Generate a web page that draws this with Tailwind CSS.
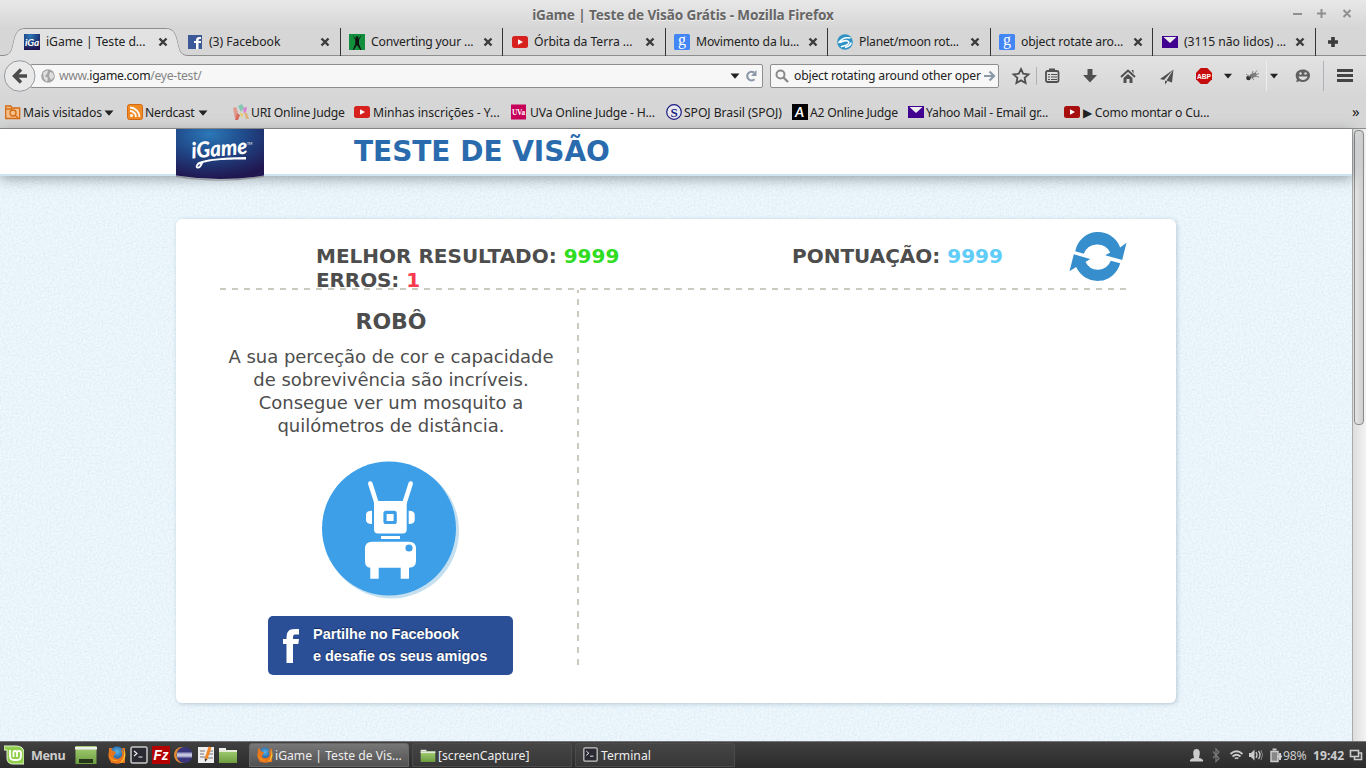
<!DOCTYPE html>
<html lang="pt">
<head>
<meta charset="utf-8">
<title>iGame | Teste de Visão Grátis</title>
<script src="https://cdn.jsdelivr.net/npm/@tailwindcss/browser@4"></script>
</head>
<body class="w-[1366px] h-[768px] overflow-hidden flex flex-col bg-[#d6d6d6] font-['Noto_Sans',sans-serif] text-[12px] text-[#222] whitespace-nowrap">
<svg width="0" height="0" class="absolute">
<defs>
<radialGradient id="logoBg" cx=".38" cy=".1" r=".9"><stop offset="0" stop-color="#2b78b8"/><stop offset=".45" stop-color="#204a8a"/><stop offset="1" stop-color="#201650"/></radialGradient>
<linearGradient id="green" x2="0" y2="1"><stop offset="0" stop-color="#a5cf75"/><stop offset="1" stop-color="#6d9c3f"/></linearGradient>
<radialGradient id="fox" cx=".5" cy=".35" r=".6"><stop offset="0" stop-color="#58b4e8"/><stop offset="1" stop-color="#164b91"/></radialGradient>
<symbol id="close" viewBox="0 0 10 10"><path d="M1.500 1.500l7 7M8.500 1.500l-7 7" stroke="#3b3b3b" stroke-width="2.400"/></symbol>
<symbol id="caret" viewBox="0 0 10 6"><path d="M.5.5h9L5 5.700z" fill="#222"/></symbol>
<symbol id="yt" viewBox="0 0 16 16"><rect y="2" width="16" height="12" rx="2.500" fill="#d6211f"/><path d="M6 5.300v5.400L11 8z" fill="#fff"/></symbol>
<symbol id="goog" viewBox="0 0 16 16"><rect width="16" height="16" rx="1.500" fill="#4285f4"/><text x="8" y="11" text-anchor="middle" font-family="Liberation Serif" font-size="16" fill="#fff">g</text></symbol>
<symbol id="mail" viewBox="0 0 16 16"><rect y="2" width="16" height="12" fill="#400090"/><path d="M1.500 3h13L8 9z" fill="#eee"/></symbol>
<symbol id="firefox" viewBox="0 0 18 18"><path d="M1 2h16v15H3z" fill="#e8761c"/><circle cx="9" cy="8" r="7.500" fill="url(#fox)"/><path d="M1.500 1.500L5 5l3 1-1.500 2.500-1 2c1 2.500 5 3 7.500.5 2-2 1-5.500-.5-7.500C16 4 18 8 17 12c-1.500 4.500-6 6.500-10 5.500C2 16.500 0 12 .5 8z" fill="#e8761c"/><path d="M16 3c3 5 1 13-5 14.500 4-2 6-8 5-14.500z" fill="#fcc935"/><path d="M1.500 8c1 5 4 7 9 6-4 3-9 0-9-6z" fill="#f7a323"/></symbol>
<symbol id="term" viewBox="0 0 18 18"><rect x="1" y="1" width="16" height="16" rx="1.500" fill="#2a2a33" stroke="#c9c9c9" stroke-width="1.500"/><path d="M4 5l3 2.500L4 10M8.500 11h4" stroke="#eee" stroke-width="1.200" fill="none"/></symbol>
<symbol id="folder" viewBox="0 0 18 16"><path d="M0 3V1h7v2z" fill="#eee"/><path d="M0 3h18v13H0z" fill="url(#green)"/><path d="M0 3h18v2H0z" fill="#e4ecd9"/></symbol>
</defs>
</svg>

<header class="h-[128px] shrink-0 flex flex-col bg-[#d6d6d6]">
  <div class="h-[28px] shrink-0 flex items-center bg-linear-to-b from-[#e8e8e8] to-[#d6d6d6]">
    <div class="w-[1283px] pl-[83px] text-center font-bold text-[13.500px] leading-[16px] pt-px text-[#666] tracking-[-0.09px] [text-shadow:0_1px_0_#f0f0f0]">iGame | Teste de Visão Grátis - Mozilla Firefox</div>
    <svg width="83" height="28" fill="none" stroke="#8f8f8f" stroke-width="2"><path d="M10 14h9M34 13.500h9M38.500 9v9M60.500 10l7 7M67.500 10l-7 7"/></svg>
  </div>
  <div class="h-[28px] shrink-0 relative flex">
    <svg class="absolute left-0 top-0" width="1366" height="28"><path d="M0 27.500h4c8-1 8-7 10-15s4-12 12-12h139c8 0 10 4 12 12s2 14 10 15h1179V28H0z" fill="none" stroke="#8e8e8e"/><path d="M4 28c8-1 8-7 10-15s4-12 12-12h139c8 0 10 4 12 12s2 14 10 15z" fill="#e2e2e2"/></svg>
    <nav class="relative flex ml-[15px] h-[28px] text-[12.200px] tracking-[-0.06px]">
      <div class="w-[163px] h-[28px] flex items-center pl-[9px]"><svg width="16" height="16"><rect width="16" height="16" fill="url(#logoBg)"/><text x="1" y="12" font-family="Lato" font-style="italic" font-weight="bold" font-size="10" fill="#fff">iGa</text></svg><span class="w-[118px] pl-[6px]">iGame | Teste d...</span><svg width="10" height="10"><use href="#close"/></svg></div>
      <div class="w-[163px] h-[28px] flex items-center pl-[9px] border-r border-[#333]"><svg width="16" height="16"><rect x="1" y="1" width="14" height="14" fill="#3b5998"/><path d="M9 15V9H7V7h2c0-3 1-4.500 5-4v2c-2 0-2.500 0-2.500 2H14v2h-2.500v6z" fill="#fff"/></svg><span class="w-[117px] pl-[6px]">(3) Facebook</span><svg width="10" height="10"><use href="#close"/></svg></div>
      <div class="w-[162px] h-[28px] flex items-center pl-[8px] border-r border-[#333]"><svg width="16" height="16"><rect width="16" height="16" fill="#128f3c"/><path d="M3.500 1l3 3.500h3L12.500 1l-2.500 5v4l2.500 6h-1L8 11l-3.300 5h-1L6.300 10V6z" fill="#111"/><circle cx="8" cy="3.500" r="1.300" fill="#111"/></svg><span class="w-[117px] pl-[6px] tracking-[-0.17px]">Converting your ...</span><svg class="ml-px" width="10" height="10"><use href="#close"/></svg></div>
      <div class="w-[163px] h-[28px] flex items-center pl-[9px] border-r border-[#333]"><svg width="16" height="16"><use href="#yt"/></svg><span class="w-[117px] pl-[6px]">Órbita da Terra ...</span><svg width="10" height="10"><use href="#close"/></svg></div>
      <div class="w-[162px] h-[28px] flex items-center pl-[8px] border-r border-[#333]"><svg width="16" height="16"><use href="#goog"/></svg><span class="w-[117px] pl-[6px] tracking-[-0.17px]">Movimento da lu...</span><svg class="ml-px" width="10" height="10"><use href="#close"/></svg></div>
      <div class="w-[163px] h-[28px] flex items-center pl-[9px] border-r border-[#333]"><svg width="16" height="16"><circle cx="8" cy="8" r="7.800" fill="#2e93c4"/><path d="M1.500 9c3-5 7-6 12-5M3 8.500c5-3 10-2 8.500 1s-5 1.500-7.500 3.500M8 13.500c4-1 6-3 6-5" stroke="#fff" stroke-width="1.600" fill="none"/></svg><span class="w-[117px] pl-[6px] tracking-[-0.23px]">Planet/moon rot...</span><svg width="10" height="10"><use href="#close"/></svg></div>
      <div class="w-[162px] h-[28px] flex items-center pl-[8px] border-r border-[#333]"><svg width="16" height="16"><use href="#goog"/></svg><span class="w-[117px] pl-[6px] tracking-[-0.14px]">object rotate aro...</span><svg class="ml-px" width="10" height="10"><use href="#close"/></svg></div>
      <div class="w-[163px] h-[28px] flex items-center pl-[9px] border-r border-[#333]"><svg width="16" height="16"><use href="#mail"/></svg><span class="w-[117px] pl-[6px]">(3115 não lidos) ...</span><svg width="10" height="10"><use href="#close"/></svg></div>
      <svg width="34" height="28"><path d="M17 9v10M12 14h10" stroke="#3b3b3b" stroke-width="3.600"/></svg>
    </nav>
  </div>
  <div class="h-[42px] shrink-0 flex items-center bg-linear-to-b from-[#e2e2e2] to-[#d6d6d6]">
    <svg class="relative z-10" width="36" height="42"><circle cx="19.700" cy="20" r="15.300" fill="#e9e9e9" stroke="#959ba2"/><path d="M27 20H16M21 13.500L14.500 20l6.500 6.500" fill="none" stroke="#4b4b4b" stroke-width="3.400"/></svg>
    <div class="-ml-[6px] w-[733px] h-[24px] mb-[2px] border border-[#8e8e8e] rounded-[2px] bg-[#f7f7f7] flex items-center pl-[10px]">
      <svg width="14" height="14"><circle cx="7" cy="7" r="6.800" fill="#a3a3a3"/><path d="M2 4c2-2 4-3 5-2l-1 3-2 2 3 2-1 4-3-3zM9 3l3 1 1 4-3 3-2-4z" fill="#dedede"/></svg>
      <span class="pl-[4px] pt-px text-[12.200px] tracking-[-0.3px] text-[#858585] w-[675px]">www.<span class="text-[#222]">igame.com</span>/eye-test/</span>
      <svg width="10" height="6"><use href="#caret"/></svg>
      <svg class="ml-[4px]" width="14" height="14"><path d="M10.500 10.200A4.300 4.300 0 1 1 10 3.500" fill="none" stroke="#8b98a8" stroke-width="2.200"/><path d="M12.500 1v6H7z" fill="#8b98a8"/></svg>
    </div>
    <div class="ml-[7px] w-[229px] h-[24px] mb-[2px] border border-[#8e8e8e] rounded-[2px] bg-[#f7f7f7] flex items-center pl-[4px]">
      <svg width="14" height="14"><circle cx="5.500" cy="5.500" r="4" fill="none" stroke="#8a8a8a" stroke-width="2"/><path d="M8.500 8.500l4.500 4.500" stroke="#8a8a8a" stroke-width="2.400"/></svg>
      <span class="ml-[5px] pt-px w-[190px] text-[12.200px] tracking-[-0.2px]">object rotating around other oper</span>
      <svg width="12" height="12"><path d="M0 6h9M5.500 1.500L10 6l-4.500 4.500" fill="none" stroke="#8b98a8" stroke-width="2.200"/></svg>
    </div>
    <div class="ml-[7px] h-[40px] mb-[2px] flex items-center">
      <svg width="30" height="20"><path d="M15 3l2.200 4.700 5.300.6-3.900 3.600 1 5.100-4.600-2.600-4.600 2.600 1-5.100-3.900-3.600 5.300-.6z" fill="none" stroke="#505050" stroke-width="1.800"/></svg>
      <i class="w-px h-[18px] bg-[#b0b0b5]"></i>
      <svg width="30" height="20" fill="none" stroke="#505050"><rect x="9" y="5" width="12.500" height="11" rx="1.500" stroke-width="1.800"/><path d="M12 4h6" stroke-width="3"/><path d="M11 8.500h2M14 8.500h6M11 11h2M14 11h6M11 13.500h2M14 13.500h6" stroke-width="1.100"/></svg>
      <svg width="46" height="20"><path d="M20.500 3h5v6h4.500l-7 7.500L16 9h4.500z" fill="#505050"/></svg>
      <svg width="30" height="20"><path d="M8 11l7-6.500 7 6.500" fill="none" stroke="#505050" stroke-width="2"/><path d="M10.500 12L15 8l4.500 4v5h-3v-4h-3v4h-3zM18.500 4h2v4z" fill="#505050"/></svg>
      <svg width="48" height="20"><path d="M30.500 3.500L17 13l4 1zM30.500 3.500L23.500 14.500l5.500 2zM22 14.500V18.500l2.500-3z" fill="#505050"/></svg>
      <svg width="26" height="20"><path d="M9.700 2h6.600L21 6.700v6.600L16.300 18H9.700L5 13.300V6.700z" fill="#c60c0c"/><text x="6" y="13" font-family="Liberation Sans" font-weight="bold" font-size="8" fill="#fff" textLength="14" lengthAdjust="spacingAndGlyphs">ABP</text></svg>
      <svg width="22" height="20"><use href="#caret" x="6.500" y="7" width="9" height="6"/></svg>
      <svg width="27" height="20"><ellipse cx="14" cy="9.500" rx="4" ry="2.300" transform="rotate(-25 14 9.500)" fill="#777"/><circle cx="9.500" cy="12" r="2.300" fill="#333"/><path d="M7 8l4 3M14 5l-1 4M18 4.500l-3 4M20 7.500l-5 2M20 11l-6-1M15 14l-3-3" stroke="#888"/></svg>
      <i class="w-px h-[30px] bg-[#eee]"></i>
      <svg width="14" height="20"><use href="#caret" x="2.500" y="7" width="9" height="6"/></svg>
      <svg width="42" height="20"><path d="M22 3.500c4 0 7 2.500 7 6s-3 6.500-7 6.500c-1.500 0-2.500-.2-3.500-.7L15 16l1-2.500c-3-4-1-10 6-10z" fill="#606060"/><path d="M17.500 10.500h9c-1 4.500-8 4.500-9 0z" fill="#ddd"/><circle cx="19.500" cy="7.500" r="1.200" fill="#ddd"/><circle cx="24.500" cy="7.500" r="1.200" fill="#ddd"/></svg>
      <i class="w-px h-[30px] bg-[#aeb2b8]"></i>
      <svg width="42" height="20"><path d="M13 4.500h16M13 9.500h16M13 14.500h16" stroke="#444" stroke-width="3"/></svg>
    </div>
  </div>
  <div class="h-[30px] flex items-center pl-[5px] text-[12.200px] tracking-[-0.24px]">
    <div class="w-[122px] flex items-center"><svg class="mb-px" width="16" height="16"><path d="M.7 2h5l1.500 2h7.500v10.500H.7z" fill="#f6c08b" stroke="#d46b14" stroke-width="1.300"/><circle cx="8" cy="9" r="3" fill="none" stroke="#d46b14" stroke-width="1.300"/><path d="M10 11l3 3M1 5h6" stroke="#d46b14" stroke-width="1.300"/></svg><span class="pl-[2px] w-[83px] tracking-[-0.1px]">Mais visitados</span><svg width="10" height="6"><use href="#caret"/></svg></div>
    <div class="w-[106px] flex items-center"><svg class="mb-px" width="16" height="16"><rect x=".5" y=".5" width="15" height="15" rx="2" fill="#f08a24" stroke="#d46b14"/><circle cx="4.500" cy="11.500" r="1.500" fill="#fff"/><path d="M3 7a6 6 0 0 1 6 6M3 3.500a9.500 9.500 0 0 1 9.500 9.500" stroke="#fff" stroke-width="1.800" fill="none"/></svg><span class="pl-[2px] w-[55px]">Nerdcast</span><svg width="10" height="6"><use href="#caret"/></svg></div>
    <div class="w-[121px] flex items-center"><svg class="mb-px" width="16" height="16"><path d="M5 2l4-2 2 4-3 4z" fill="#84c8b4"/><path d="M0 4l3-1 2 5-3 7z" fill="#e09a90"/><path d="M10 4l4-1-1 5-2 2z" fill="#d97fd4"/><path d="M4 9l3 2-2 5H2z" fill="#d96a5c"/><path d="M7 9l3 1-1 4z" fill="#efc94a"/><path d="M11 8l3 1 2 6h-3z" fill="#ddb380"/></svg><span class="pl-[2px]">URI Online Judge</span></div>
    <div class="w-[157px] flex items-center"><svg class="mb-px" width="16" height="16"><use href="#yt"/></svg><span class="pl-[3px] tracking-[-0.05px]">Minhas inscrições - Y...</span></div>
    <div class="w-[155px] flex items-center"><svg class="mb-px" width="16" height="16"><rect width="15" height="15" y=".5" fill="#c8005a"/><text x="1" y="11" font-family="Liberation Serif" font-weight="bold" font-size="8" fill="#fff" textLength="13" lengthAdjust="spacingAndGlyphs">UVa</text></svg><span class="pl-[3px] tracking-[-0.17px]">UVa Online Judge - H...</span></div>
    <div class="w-[126px] flex items-center"><svg class="mb-px" width="16" height="16"><circle cx="8" cy="8" r="7.300" fill="#e8e8f0" stroke="#1a1a80" stroke-width="1.200"/><text x="8" y="12.500" text-anchor="middle" font-family="Liberation Serif" font-weight="bold" font-size="13" fill="#1a1a80">S</text></svg><span class="pl-[2px] tracking-[-0.08px]">SPOJ Brasil (SPOJ)</span></div>
    <div class="w-[116px] flex items-center"><svg class="mb-px" width="16" height="16"><rect width="16" height="16"/><text x="7.500" y="13" text-anchor="middle" font-family="Lato" font-style="italic" font-weight="bold" font-size="14" fill="#fff">A</text></svg><span class="pl-[2px]">A2 Online Judge</span></div>
    <div class="w-[156px] flex items-center"><svg class="mb-px" width="16" height="16"><use href="#mail"/></svg><span class="pl-[2px]">Yahoo Mail - Email gr...</span></div>
    <div class="w-[287px] flex items-center"><svg class="mb-px" width="16" height="16"><rect y="2" width="16" height="12" rx="2.500" fill="#a80f0f"/><path d="M6 5.300v5.400L11 8z" fill="#fff"/></svg><span class="pl-[3px] tracking-[-0.2px]">▶ Como montar o Cu...</span></div>
    <span class="text-[15px] leading-[14px] pb-[5px] pl-px">»</span>
  </div>
</header>

<div class="h-[613px] shrink-0 border-t border-[#8e8e8e] flex">
  <main class="w-[1352px] h-[612px] relative bg-[#e8f3fb] text-[#4d4d4d] font-['DejaVu_Sans',sans-serif]">
    <svg class="absolute inset-0" width="1352" height="612"><filter id="grain" x="0" y="0" width="100%" height="100%" color-interpolation-filters="sRGB"><feTurbulence type="fractalNoise" baseFrequency=".5" numOctaves="2" seed="4"/><feColorMatrix values=".13 0 0 0 .848  .08 0 0 0 .916  .035 0 0 0 .965  0 0 0 0 1"/></filter><rect width="1352" height="612" filter="url(#grain)"/></svg>
    <div class="relative h-[47px] bg-white border-b-2 border-[#cfe3f0] shadow-[0_3px_12px_rgba(70,80,88,0.5)] flex pl-[176px]">
      <svg class="relative h-[54px] w-[88px] shrink-0" viewBox="0 0 88 54"><path d="M0 46.500q44 8 88 0v1.500q-44 7.500-88 0z" fill="#777" opacity=".6"/><path d="M0 0h88v46.500q-44 7-88 0z" fill="url(#logoBg)"/><g transform="translate(16 29.500) rotate(-5)"><text font-family="Lato" font-style="italic" font-weight="900" font-size="22" fill="#fff" textLength="56" lengthAdjust="spacingAndGlyphs">iGame</text></g><path d="M22 33.500C30 30 45 28.500 70 28v2.500C46 30.500 34 31.500 27 34q-2 6-6 5.500-3-2 1-6zM23 35.500q-2 1.500-1.500 2.500 2 0 3-3z" fill="#fff" fill-rule="evenodd"/><text x="71" y="16" font-family="Lato" font-size="3.500" fill="#fff">TM</text></svg>
      <h1 class="pl-[90px] pt-[5px] font-bold text-[28px] leading-[36px] text-[#2a6bae] tracking-[-0.03px]">TESTE DE VISÃO</h1>
    </div>
    <section class="relative mt-[43px] ml-[176px] w-[1000px] h-[484px] bg-white rounded-[6px] shadow-[1px_1px_4px_rgba(90,120,140,0.35)] px-[44px]">
      <div class="h-[69px] pt-[25px] flex font-bold text-[20px] leading-[24px]">
        <div class="pl-[96px] w-[572px]"><p>MELHOR RESULTADO: <span class="text-[#2fdc1f]">9999</span></p><p class="tracking-[-0.1px]">ERROS: <span class="text-[#f93a4c]">1</span></p></div>
        <p class="w-[277px]">PONTUAÇÃO: <span class="text-[#60ccf8]">9999</span></p>
        <svg class="-mt-[12px] shrink-0" width="60" height="51" viewBox="0 0 60 51" fill="#368fcc"><path d="M6.200 19.300A23.500 24 0 0 1 51.200 15.500L57.500 10.700 53.200 28 36.200 23.300 41.200 20.500A14.500 14.500 0 0 0 14.800 21.700z"/><path d="M51.200 31.300A23.500 24 0 0 1 7.200 35L.5 39.200 4.800 22.300 21.200 27 16.500 30A14 14.500 0 0 0 41.800 28.800z"/></svg>
      </div>
      <div class="w-[906px] h-[2px] bg-[repeating-linear-gradient(90deg,#ccc9bf_0_6px,transparent_6px_12px)]"></div>
      <div class="flex">
        <div class="w-[341px] mr-[16px] flex flex-col items-center">
          <h2 class="mt-[18px] pl-px font-bold text-[22px] leading-[28px]">ROBÔ</h2>
          <p class="mt-[9px] pl-px text-[18px] leading-[23px] text-center tracking-[-0.03px]">A sua perceção de cor e capacidade<br>de sobrevivência são incríveis.<br>Consegue ver um mosquito a<br>quilómetros de distância.</p>
          <svg class="mt-[24px] shrink-0" width="137" height="138" viewBox="0 0 137 138"><circle cx="69.500" cy="70" r="67.500" fill="#c4e0f0"/><circle cx="67" cy="67.500" r="67" fill="#3d9fe8"/><g fill="#fff"><path d="M48.300 22.500L54.500 42M88.700 22.500L82.500 42" stroke="#fff" stroke-width="4.500" stroke-linecap="round"/><path d="M52 40h32.700v28.500q0 4-4 4H56q-4 0-4-4z"/><path d="M50 49.700V63q-6 0-6-4v-5.300q0-4 6-4zM86.700 49.700V63q6 0 6-4v-5.300q0-4-6-4z"/><path d="M59 75h19v3H59z"/><path d="M50 80.700h37q7 0 7 7v12q0 7-7 7v11h-8.300v-11H56.700v11h-8.400v-11q-5.300 0-5.300-7v-12q0-7 7-7z"/></g><rect x="63" y="51.300" width="10.200" height="10.200" rx="1" fill="#fff" stroke="#3d9fe8" stroke-width="3.200"/><circle cx="87" cy="87" r="3.600" fill="#3d9fe8"/></svg>
          <button class="mt-[17px] w-[245px] h-[59px] rounded-[5px] bg-[#2b4f96] flex items-center text-left text-white font-['Liberation_Sans',sans-serif] font-bold text-[14.500px] leading-[22px] [text-shadow:0_-1px_1px_#162b58]"><svg class="ml-[15px]" width="17" height="34"><path d="M3.500 34V15H0v-5h3.500C3.500 3 5 0 12 0h4v5.500h-3.500C10 5.500 10 7 10 10h6l-.7 5H10v19z" fill="#fff"/></svg><span class="ml-[13px] pb-[2px] tracking-[-0.03px]">Partilhe no Facebook<br>e desafie os seus amigos</span></button>
        </div>
        <div class="w-[2px] h-[375px] bg-[repeating-linear-gradient(180deg,#ccc9bf_0_3px,transparent_3px_9px,#ccc9bf_9px_12px)]"></div>
      </div>
    </section>
  </main>
  <aside class="w-[14px] h-[612px] border-l border-[#aaa] bg-linear-to-r from-[#ddd] to-[#f3f3f3] pl-px pt-px"><div class="w-[10px] h-[295px] rounded-[4px] border border-[#8b8b8b] bg-linear-to-r from-[#e5e5e5] to-[#cecece]"></div></aside>
</div>

<footer class="h-[27px] shrink-0 border-t border-[#777] bg-linear-to-b from-[#404040] to-[#2b2b2b] flex items-center text-[12.200px] text-[#ededed]">
  <svg class="ml-[4px]" width="20" height="20"><path d="M0 1h12q8 0 8 7v11H9q-6 0-6-6V5H0z" fill="#8fcf4b" stroke="#e3f2d3"/><path d="M6 5v6q0 4 4 4h3q4 0 4-4V8q0-2-2-2t-2 2v4M13 8q0-2-2-2T9.500 8v4" fill="none" stroke="#fff" stroke-width="1.800"/></svg>
  <span class="ml-[7px] w-[44px] pt-[2px] font-bold text-[12.600px] text-[#ccc] tracking-[-0.4px]">Menu</span>
  <svg width="22" height="18"><rect x=".5" width="21" height="18" fill="url(#green)"/><path d="M0 1h22v2.500H0z" fill="#eee"/><path d="M4 13h14v4H4z" fill="#26361b"/></svg>
  <div class="flex items-center gap-[4px] ml-[11px] w-[141px]">
    <svg width="18" height="18"><use href="#firefox"/></svg>
    <svg width="18" height="18"><use href="#term"/></svg>
    <svg width="18" height="18"><rect width="18" height="18" fill="#b50000"/><text x="1.500" y="14" font-family="Liberation Sans" font-style="italic" font-weight="bold" font-size="15" fill="#fff" textLength="15" lengthAdjust="spacingAndGlyphs">Fz</text></svg>
    <svg width="19" height="18"><circle cx="8" cy="9" r="8" fill="#e48a30"/><circle cx="10.500" cy="9" r="8" fill="#38357c"/><path d="M3 6.500h15v5H3z" fill="#a5a5cc"/><path d="M3 9h15" stroke="#e4e4f4"/></svg>
    <svg width="18" height="18"><rect x="1" y="1" width="16" height="16" fill="#eee"/><path d="M3 5h5M3 8h4M3 11h5M11 5h5M12 8h4M11 12h5" stroke="#777"/><path d="M13 1L9 13" stroke="#f4892a" stroke-width="3"/><path d="M7.800 12.500l2.500.8L8 16z" fill="#333"/></svg>
    <svg width="18" height="16"><use href="#folder"/></svg>
  </div>
  <div class="w-[160px] h-[24px] rounded-t-[3px] border border-[#666] bg-linear-to-b from-[#777] to-[#515151] flex items-center pl-[7px]"><svg width="16" height="16" class="mb-px"><use href="#firefox"/></svg><span class="pl-[2px] pt-[2px]">iGame | Teste de Vis...</span></div>
  <div class="ml-[3px] w-[160px] h-[24px] rounded-t-[3px] border border-[#4c4c4c] bg-linear-to-b from-[#454545] to-[#383838] flex items-center pl-[7px]"><svg width="16" height="13"><use href="#folder"/></svg><span class="pl-[2px] pt-[2px]">[screenCapture]</span></div>
  <div class="ml-[3px] w-[160px] h-[24px] rounded-t-[3px] border border-[#4c4c4c] bg-linear-to-b from-[#454545] to-[#383838] flex items-center pl-[7px]"><svg width="15" height="15" class="mb-px"><use href="#term"/></svg><span class="pl-[3px] pt-[2px]">Terminal</span></div>
  <div class="ml-auto w-[177px] flex items-center text-[#ccc]">
    <svg width="94" height="20" fill="none" stroke="#ccc"><path d="M1 16.500q-1-2.500 4-3.500Q2.500 4 7.500 4T10 13q5 1 4 3.500z" fill="#ccc" stroke="none"/><path d="M24 6.500l6 7-3 3V4l3 3-6 6" stroke="#777" stroke-width="1.300"/><path d="M41.500 9q6-5.500 12 0M43.500 11.500q4-3.500 8 0M45.800 13.500q1.800-1 3.500 0" stroke-width="1.700"/><path d="M60 8h2l3.500-3.500v11L62 12h-2z" fill="#ccc" stroke="none"/><path d="M67 7q2 3 0 6M69.500 6q3 4 0 8" stroke-width="1.300"/><path d="M72 5q3 5 0 10" stroke="#888"/><path d="M82 6.500h7v10h-7z" fill="#888" stroke-width="1.500"/><path d="M83.500 4.500h4M88 11.500h5M91 8v7" stroke-width="2"/></svg>
    <span class="w-[30px] pt-[2px] tracking-[-0.2px]">98%</span><span class="w-[36px] pt-[2px] font-bold">19:42</span>
    <svg class="mt-[2px]" width="17" height="16" fill="none" stroke="#ccc" stroke-width="1.600"><path d="M5.500 9V11.500h7V5h-3"/><rect x="1.500" y="2.500" width="8" height="6"/></svg>
  </div>
</footer>
</body>
</html>
